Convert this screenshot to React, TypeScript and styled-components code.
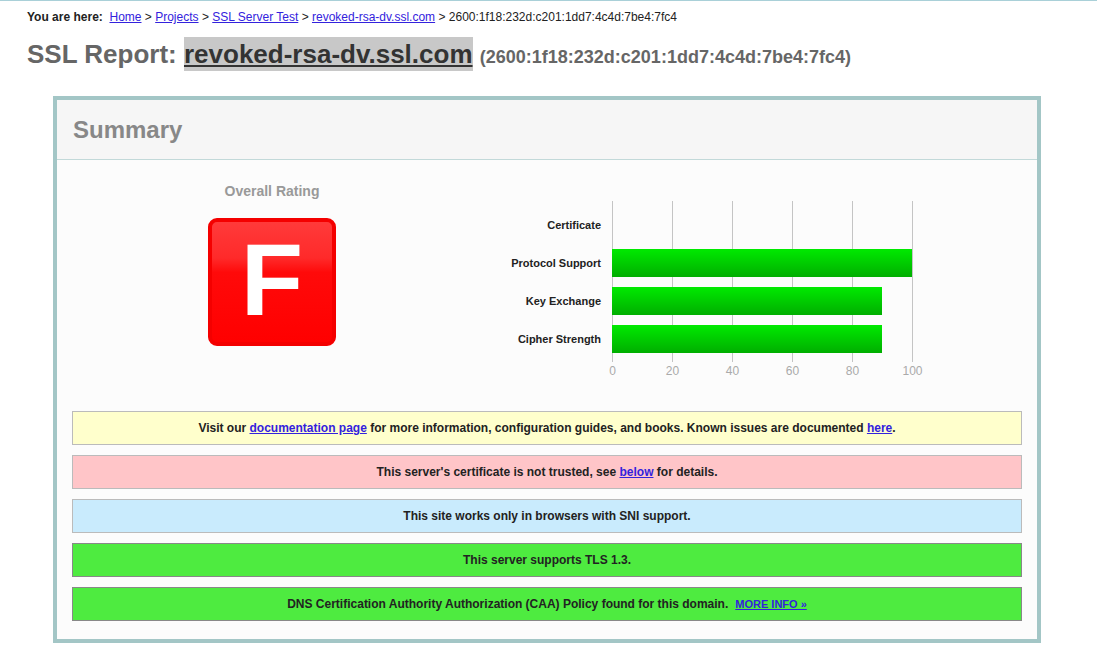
import styled, { createGlobalStyle } from "styled-components";

const GlobalStyle = createGlobalStyle`
    body {
        margin: 0;
        background: #fff;
        font-family: "Liberation Sans", Arial, sans-serif;
        color: #222;
    }
`;

const LinkColor = "#3322dd";

type Rating = { label: string; value: number | null };

const RatingsData: Rating[] = [
    { label: "Certificate", value: null },
    { label: "Protocol Support", value: 100 },
    { label: "Key Exchange", value: 90 },
    { label: "Cipher Strength", value: 90 },
];

const Ticks = [0, 20, 40, 60, 80, 100];

const RatingChart = () => {
    const x0 = 140;
    const scale = 3;
    const rowTop = 28;
    const rowStep = 38;

    return (
        <ChartSvg width={460} height={200} viewBox="0 0 460 200">
            <defs>
                <linearGradient id="barGreen" x1="0" y1="0" x2="0" y2="1">
                    <stop offset="0" stopColor="#00ea00" />
                    <stop offset="1" stopColor="#00ae00" />
                </linearGradient>
            </defs>

            {Ticks.map((t) => (
                <g key={t}>
                    <line
                        x1={x0 + t * scale + 0.5}
                        x2={x0 + t * scale + 0.5}
                        y1={18}
                        y2={179}
                        stroke="#c4c4c4"
                        strokeWidth={1}
                    />
                    <text
                        x={x0 + t * scale + 0.5}
                        y={192}
                        textAnchor="middle"
                        fontSize={12}
                        fill="#aaa"
                    >
                        {t}
                    </text>
                </g>
            ))}

            {RatingsData.map((r, i) => (
                <g key={r.label}>
                    <text
                        x={129}
                        y={rowTop + i * rowStep + 18}
                        textAnchor="end"
                        fontSize={11}
                        fontWeight="bold"
                        fill="#222"
                    >
                        {r.label}
                    </text>
                    {r.value !== null && (
                        <rect
                            x={x0}
                            y={rowTop + i * rowStep}
                            width={r.value * scale}
                            height={28}
                            fill="url(#barGreen)"
                        />
                    )}
                </g>
            ))}
        </ChartSvg>
    );
};

export default function App() {
    return (
        <>
            <GlobalStyle />
            <Page>
                <Breadcrumb>
                    <b>You are here:</b>&nbsp; <a href="#">Home</a> &gt;{" "}
                    <a href="#">Projects</a> &gt; <a href="#">SSL Server Test</a>{" "}
                    &gt; <a href="#">revoked-rsa-dv.ssl.com</a> &gt;
                    2600:1f18:232d:c201:1dd7:4c4d:7be4:7fc4
                </Breadcrumb>

                <Title>
                    SSL Report: <Host href="#">revoked-rsa-dv.ssl.com</Host>{" "}
                    <Address>(2600:1f18:232d:c201:1dd7:4c4d:7be4:7fc4)</Address>
                </Title>

                <Frame>
                    <Header>Summary</Header>

                    <Content>
                        <TopRow>
                            <RatingColumn>
                                <RatingTitle>Overall Rating</RatingTitle>
                                <Grade>F</Grade>
                            </RatingColumn>

                            <RatingChart />
                        </TopRow>

                        <Messages>
                            <Message $kind="info">
                                Visit our <a href="#">documentation page</a> for
                                more information, configuration guides, and
                                books. Known issues are documented{" "}
                                <a href="#">here</a>.
                            </Message>
                            <Message $kind="error">
                                This server's certificate is not trusted, see{" "}
                                <a href="#">below</a> for details.
                            </Message>
                            <Message $kind="notice">
                                This site works only in browsers with SNI
                                support.
                            </Message>
                            <Message $kind="good">
                                This server supports TLS 1.3.
                            </Message>
                            <Message $kind="good">
                                DNS Certification Authority Authorization (CAA)
                                Policy found for this domain.
                                <MoreInfo href="#">MORE INFO »</MoreInfo>
                            </Message>
                        </Messages>
                    </Content>
                </Frame>
            </Page>
        </>
    );
}

const Page = styled.div`
    border-top: 1px solid #a9d0d8;
    padding: 0 0 10px 27px;

    a {
        color: ${LinkColor};
    }
`;

const Breadcrumb = styled.div`
    margin-top: 9px;
    font-size: 12px;
    line-height: 14px;
    color: #222;
`;

const Title = styled.h1`
    margin: 14px 0 0;
    font-size: 26px;
    line-height: 32px;
    font-weight: bold;
    color: #666;
    white-space: nowrap;
`;

const Host = styled.a`
    && {
        color: #333;
    }
    background: #c8c8c8;
    padding: 2px 0;
`;

const Address = styled.span`
    font-size: 18px;
    line-height: 1;
    color: #666;
`;

const Frame = styled.div`
    box-sizing: border-box;
    width: 988px;
    margin: 26px 0 0 26px;
    border: 4px solid #a3c6c6;
    background: #fcfcfc;
`;

const Header = styled.div`
    height: 60px;
    box-sizing: border-box;
    display: flex;
    align-items: center;
    padding-left: 16px;
    background: #f6f6f6;
    border-bottom: 1px solid #c2d9d9;
    font-size: 24px;
    font-weight: bold;
    color: #888;
`;

const Content = styled.div`
    padding: 0 15px 18px;
`;

const TopRow = styled.div`
    display: flex;
    align-items: flex-start;
    height: 251px;
    box-sizing: border-box;
    padding-top: 23px;
`;

const RatingColumn = styled.div`
    width: 400px;
    display: flex;
    flex-direction: column;
    align-items: center;
`;

const RatingTitle = styled.div`
    font-size: 14px;
    line-height: 16px;
    font-weight: bold;
    color: #999;
`;

const Grade = styled.div`
    margin-top: 19px;
    box-sizing: border-box;
    width: 128px;
    height: 128px;
    border: 4px solid #f40000;
    border-radius: 9px;
    background: linear-gradient(
        #ff3a3a 0%,
        #ff2a2a 30%,
        #ff0a0a 42%,
        #ff0000 100%
    );
    display: flex;
    align-items: center;
    justify-content: center;
    color: #fff;
    font-size: 102px;
    font-weight: bold;
    line-height: 1;
    padding-bottom: 4px;
`;

const ChartSvg = styled.svg`
    display: block;
    font-family: "Liberation Sans", Arial, sans-serif;
`;

const Messages = styled.div`
    display: flex;
    flex-direction: column;
    gap: 10px;
`;

const MessageColors = {
    info: { bg: "#ffffcc", border: "#bbb" },
    error: { bg: "#ffc5c8", border: "#bbb" },
    notice: { bg: "#c9ebfd", border: "#bbb" },
    good: { bg: "#4eeb40", border: "#888" },
};

const Message = styled.div<{ $kind: keyof typeof MessageColors }>`
    box-sizing: border-box;
    height: 34px;
    padding: 8px 10px;
    border: 1px solid ${({ $kind }) => MessageColors[$kind].border};
    background: ${({ $kind }) => MessageColors[$kind].bg};
    text-align: center;
    font-size: 12px;
    line-height: 16px;
    font-weight: bold;
    color: #222;
`;

const MoreInfo = styled.a`
    margin-left: 7px;
    font-size: 11px;
`;
